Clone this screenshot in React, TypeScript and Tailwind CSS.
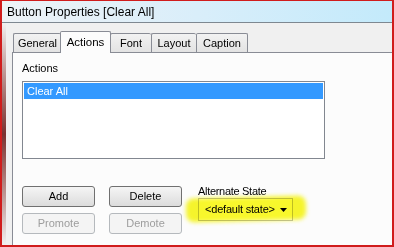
import React from "react";

const tabs = [
  { t: "General", w: "w-[48px]" },
  { t: "Actions", w: "w-[51px]" },
  { t: "Font", w: "w-[41px]" },
  { t: "Layout", w: "w-[45px]" },
  { t: "Caption", w: "w-[52px]" },
];

const Btn = ({ label, disabled }: { label: string; disabled?: boolean }) => (
  <div
    className={
      disabled
        ? "w-[73px] h-[21px] flex items-center justify-center rounded-[3px] border border-[#b5b9bd] bg-[#f4f4f4] text-[#9d9d9d]"
        : "w-[73px] h-[21px] flex items-center justify-center rounded-[3px] border border-[#707070] bg-gradient-to-b from-[#f5f5f5] to-[#dcdcdc] text-black"
    }
  >
    {label}
  </div>
);

export default function App() {
  return (
    <div
      className="w-[394px] h-[247px] flex flex-col border-t border-l-2 border-r-2 border-b-2 border-[#d01c1c] text-[11px] text-black overflow-hidden"
      style={{ fontFamily: '"Liberation Sans", Arial, sans-serif' }}
    >
      {/* title bar */}
      <div className="h-[22px] shrink-0 flex items-center pl-[5px] bg-gradient-to-r from-[#eef2f6] via-[#d9eefa] to-[#c3eafb] border-b border-[#7e8891] text-[12px]">
        Button Properties [Clear All]
      </div>

      <div className="flex-1 flex bg-[#f0f0f0]">
        {/* shadow band on the left edge */}
        <div className="w-[4px] shrink-0 bg-gradient-to-b from-[#f0f0f0] via-[#7a3030] to-[#f0f0f0]" />

        <div className="flex-1 flex flex-col pl-[6px] pt-[8px]">
          {/* tabs */}
          <div className="flex items-end h-[21px] pl-[1px] relative z-10">
            {tabs.map(({ t, w }) =>
              t === "Actions" ? (
                <div
                  key={t}
                  className={`${w} h-[22px] -mb-[1px] flex items-center justify-center bg-[#fcfcfc] border border-b-0 border-[#898c95] rounded-t-[2px] -mx-[1px] text-[11.5px]`}
                >
                  {t}
                </div>
              ) : (
                <div
                  key={t}
                  className={`${w} h-[19px] flex items-center justify-center bg-gradient-to-b from-[#f2f2f2] to-[#e3e3e3] border border-b-0 border-r-0 last:border-r border-[#898c95] rounded-t-[2px] text-[11px]`}
                >
                  {t}
                </div>
              )
            )}
          </div>

          {/* panel */}
          <div className="flex-1 bg-[#fcfcfc] border-l border-t border-[#898c95] pl-[9px] pt-[8px] flex flex-col">
            <div className="h-[14px] leading-[14px]">Actions</div>
            <div className="mt-[6px] w-[303px] h-[78px] border border-[#828790] bg-white p-[1px]">
              <div className="h-[16px] bg-[#3399ff] text-white pl-[3px] flex items-center">
                Clear All
              </div>
            </div>

            <div className="flex mt-[26px]">
              <div className="flex flex-col gap-[6px] pt-[1px]">
                <div className="flex gap-[14px]">
                  <Btn label="Add" />
                  <Btn label="Delete" />
                </div>
                <div className="flex gap-[14px]">
                  <Btn label="Promote" disabled />
                  <Btn label="Demote" disabled />
                </div>
              </div>

              <div className="ml-[16px] -mt-[1px] flex flex-col">
                <div className="h-[14px] leading-[14px] tracking-[-0.3px]">Alternate State</div>
                <div className="relative mt-[0px] w-[95px] h-[23px] border border-[#c4c4c4] bg-white flex items-center pl-[6px]">
                  <span className="tracking-[-0.2px]">&lt;default state&gt;</span>
                  <svg className="absolute right-[4px] top-[9px]" width="8" height="5" viewBox="0 0 8 5">
                    <path d="M0 0 H7 L3.5 4 Z" fill="#000" />
                  </svg>
                  {/* highlighter mark */}
                  <div className="absolute -left-[13px] -top-[2px] w-[120px] h-[24px] bg-[#f8f72c] mix-blend-multiply blur-[2px] rounded-[8px] -rotate-[1.5deg]" />
                </div>
              </div>
            </div>
          </div>
        </div>
      </div>
    </div>
  );
}
